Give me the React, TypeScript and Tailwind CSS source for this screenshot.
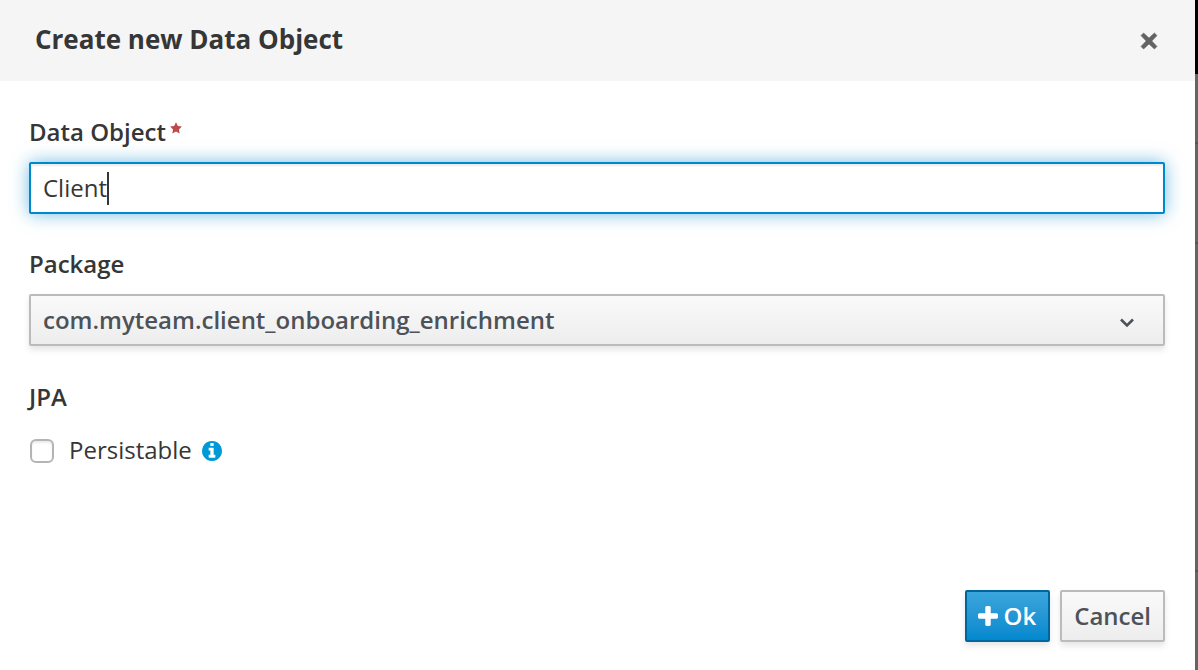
import { useState } from 'react';

function CloseIcon() {
  return (
    <svg viewBox="0 0 18 18" className="size-[18px]" aria-hidden="true">
      <path
        d="M3.6 1 L9 6.1 L14.4 1 L17 3.6 L11.8 9 L17 14.4 L14.4 17 L9 11.9 L3.6 17 L1 14.4 L6.2 9 L1 3.6 Z"
        fill="currentColor"
        stroke="currentColor"
        strokeWidth="0.6"
        strokeLinejoin="round"
      />
    </svg>
  );
}

function StarIcon() {
  return (
    <svg viewBox="0 0 22 22" className="size-3" aria-hidden="true">
      <path
        d="M11 0.5 L14.4 7.2 L21.8 8.4 L16.4 13.6 L17.7 21.2 L11 17.6 L4.3 21.2 L5.6 13.6 L0.2 8.4 L7.6 7.2 Z"
        fill="currentColor"
      />
    </svg>
  );
}

function ChevronIcon() {
  return (
    <svg viewBox="0 0 14 10" className="h-[10px] w-[14px]" aria-hidden="true">
      <path d="M1 1.5 L7 7.4 L13 1.5" fill="none" stroke="currentColor" strokeWidth="2.6" />
    </svg>
  );
}

function InfoIcon() {
  return (
    <svg viewBox="128 128 1536 1536" className="size-5" aria-hidden="true">
      <path
        d="M1152 1376v-160q0-14-9-23t-23-9h-96v-512q0-14-9-23t-23-9h-320q-14 0-23 9t-9 23v160q0 14 9 23t23 9h96v320h-96q-14 0-23 9t-9 23v160q0 14 9 23t23 9h448q14 0 23-9t9-23zm-128-896v-160q0-14-9-23t-23-9h-192q-14 0-23 9t-9 23v160q0 14 9 23t23 9h192q14 0 23-9t9-23zm640 416q0 209-103 385.5t-279.5 279.5-385.5 103-385.5-103-279.5-279.5-103-385.5 103-385.5 279.5-279.5 385.5-103 385.5 103 279.5 279.5 103 385.5z"
        fill="currentColor"
      />
    </svg>
  );
}

function PlusIcon() {
  return (
    <svg viewBox="192 128 1408 1408" className="size-5" aria-hidden="true">
      <path
        d="M1600 736v192q0 40-28 68t-68 28h-416v416q0 40-28 68t-68 28h-192q-40 0-68-28t-28-68v-416h-416q-40 0-68-28t-28-68v-192q0-40 28-68t68-28h416v-416q0-40 28-68t68-28h192q40 0 68 28t28 68v416h416q40 0 68 28t28 68z"
        fill="currentColor"
      />
    </svg>
  );
}

export default function App() {
  const [name, setName] = useState('Client');
  const [persistable, setPersistable] = useState(false);

  return (
    <div className="flex min-h-screen bg-white font-['Open_Sans',sans-serif] text-2xl leading-8 text-[#363636]">
      <main className="flex min-w-0 flex-1 flex-col" role="dialog" aria-labelledby="dialog-title">
        <header className="flex items-center justify-between bg-[#f5f5f5] py-6 pr-[37px] pl-[35px]">
          <h1 id="dialog-title" className="pb-0.5 text-[26px] leading-[31px] font-bold">
            Create new Data Object
          </h1>
          <button type="button" aria-label="Close" className="text-[#636363]">
            <CloseIcon />
          </button>
        </header>

        <form className="flex flex-1 flex-col pt-[35px] pr-[30px] pb-7 pl-[29px]" onSubmit={(e) => e.preventDefault()}>
          <div className="mb-[34px]">
            <label htmlFor="object-name" className="mb-3.5 flex gap-1 font-semibold">
              Data Object
              <span className="mt-1.5 text-[#c04848]">
                <StarIcon />
              </span>
            </label>
            <div className="relative">
              <input
                id="object-name"
                type="text"
                required
                value={name}
                onChange={(e) => setName(e.target.value)}
                className="block h-[52px] w-full rounded-[2px] border-2 border-[#0088ce] bg-white px-3 pb-0.5 caret-transparent shadow-[inset_0_2px_2px_rgba(3,3,3,0.075),0_0_18px_rgba(0,136,206,0.55)] outline-none"
              />
              <div
                aria-hidden="true"
                className="pointer-events-none absolute inset-y-0 left-0 flex items-center pl-3.5"
              >
                <span className="invisible whitespace-pre">{name}</span>
                <span className="h-[33px] w-0.5 bg-[#363636]" />
              </div>
            </div>
          </div>

          <div className="mb-[35px]">
            <label htmlFor="package" className="mb-3.5 block font-semibold">
              Package
            </label>
            <div className="relative">
              <select
                id="package"
                className="block h-[52px] w-full appearance-none rounded-[2px] border-2 border-[#bbb] bg-linear-to-b from-[#fafafa] to-[#ededed] px-3 font-semibold text-[#4d5258] shadow-[0_4px_6px_rgba(3,3,3,0.1)]"
              >
                <option>com.myteam.client_onboarding_enrichment</option>
              </select>
              <span className="pointer-events-none absolute inset-y-0 right-[31px] flex items-center pt-1.5 text-[#4d5258]">
                <ChevronIcon />
              </span>
            </div>
          </div>

          <fieldset>
            <legend className="mb-[21px] font-semibold">JPA</legend>
            <div className="flex items-center pl-px">
              <input
                id="persistable"
                type="checkbox"
                checked={persistable}
                onChange={(e) => setPersistable(e.target.checked)}
                className="size-6 appearance-none rounded-[6px] border-2 border-[#b4b4b4] bg-white shadow-[inset_0_2px_2px_rgba(0,0,0,0.08)] checked:bg-[#0088ce]"
              />
              <label htmlFor="persistable" className="ml-[15px] pb-0.5">
                Persistable
              </label>
              <span className="ml-2.5 text-[#0099d8]">
                <InfoIcon />
              </span>
            </div>
          </fieldset>

          <div className="mt-auto flex justify-end gap-2.5 font-semibold">
            <button
              type="submit"
              className="flex h-[52px] items-center gap-1.5 rounded-[2px] border-2 border-[#00659c] bg-linear-to-b from-[#39a5dc] to-[#0088ce] pr-3 pl-[11px] text-white shadow-[0_4px_6px_rgba(3,3,3,0.1)]"
            >
              <PlusIcon />
              Ok
            </button>
            <button
              type="button"
              className="h-[52px] rounded-[2px] border-2 border-[#bbb] bg-linear-to-b from-[#fafafa] to-[#ededed] px-3 text-[#4d5258] shadow-[0_4px_6px_rgba(3,3,3,0.1)]"
            >
              Cancel
            </button>
          </div>
        </form>
      </main>

      <div aria-hidden="true" className="flex w-[3px] flex-col bg-[#646464]">
        <div className="h-[74px] bg-black" />
        <div className="mt-[68px] h-0.5 bg-[#555]" />
        <div className="mt-[98px] h-0.5 bg-[#555]" />
        <div className="mt-[326px] h-0.5 bg-[#555]" />
      </div>
    </div>
  );
}
